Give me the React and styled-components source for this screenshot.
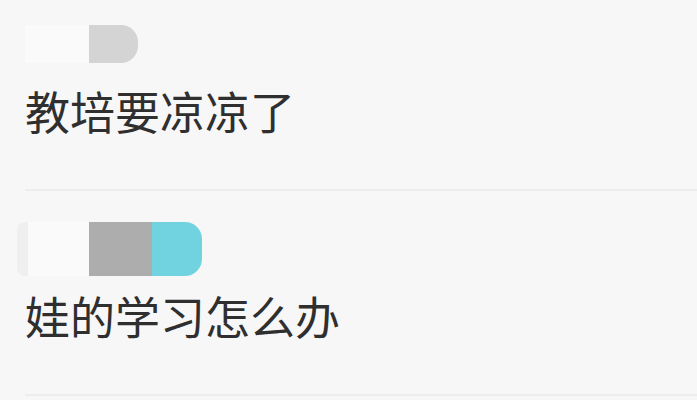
import React from "react";
import styled, { createGlobalStyle } from "styled-components";

const posts = [
    {
        title: "教培要凉凉了",
        height: 38,
        shift: 0,
        gap: 25,
        parts: [
            { w: 64, bg: "#fafafa" },
            { w: 49, bg: "#d4d4d4", end: true },
        ],
    },
    {
        title: "娃的学习怎么办",
        height: 54,
        shift: -8,
        gap: 17,
        parts: [
            { w: 11, bg: "#efefef", start: true },
            { w: 61, bg: "#fafafa" },
            { w: 63, bg: "#adadad" },
            { w: 50, bg: "#72d3e0", end: true },
        ],
    },
];

function App(){
    return(
        <>
            <GlobalStyle />
            <PostList>
                {posts.map((post) => (
                    <PostItem key={post.title}>
                        <Author $h={post.height} $shift={post.shift}>
                            {post.parts.map((p, i) => (
                                <Patch key={i} $w={p.w} $bg={p.bg} $start={p.start} $end={p.end} />
                            ))}
                        </Author>
                        <PostTitle $gap={post.gap}>{post.title}</PostTitle>
                    </PostItem>
                ))}
            </PostList>
        </>
    );
}

const GlobalStyle = createGlobalStyle`
    body {
        margin: 0;
        background: #f7f7f7;
        font-family: "Noto Sans CJK SC", "Noto Sans", sans-serif;
        overflow: hidden;
    }
`;

const PostList = styled.div`
    margin-top: -6px;
    padding-left: 25px;
`;

const PostItem = styled.div`
    padding: 31px 0 56px;
    border-bottom: 2px solid #ededed;
`;

const Author = styled.div`
    display: flex;
    height: ${(p) => p.$h}px;
    margin-left: ${(p) => p.$shift}px;
`;

const Patch = styled.div`
    width: ${(p) => p.$w}px;
    background: ${(p) => p.$bg};
    border-radius: ${(p) => (p.$start ? "8px 0 0 8px" : p.$end ? "0 17px 17px 0" : "0")};
`;

const PostTitle = styled.div`
    margin-top: ${(p) => p.$gap}px;
    font-size: 45px;
    line-height: 1;
    color: #2f2f2f;
    white-space: nowrap;
`;

export default App;
